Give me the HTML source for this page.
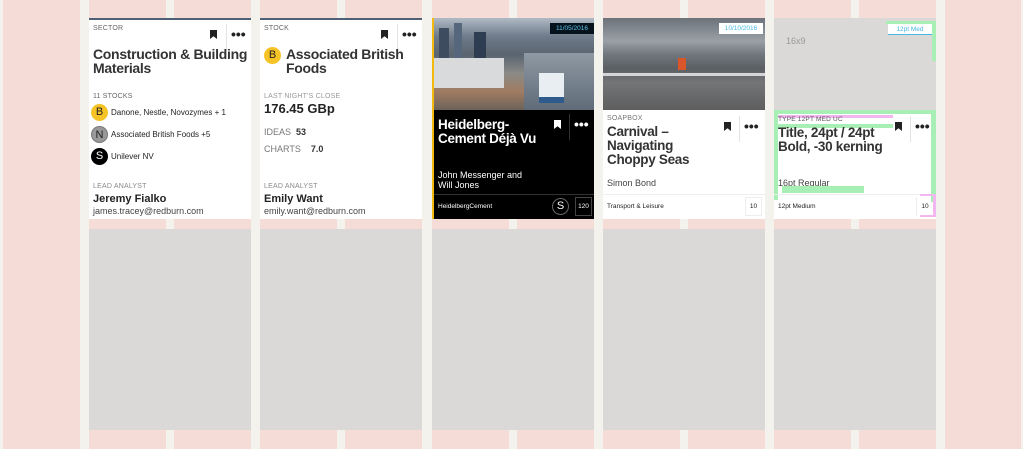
<!DOCTYPE html>
<html><head><meta charset="utf-8"><style>
*{margin:0;padding:0;box-sizing:border-box}
body{width:1023px;height:449px;background:#f3f2ed;position:relative;overflow:hidden;font-family:"Liberation Sans",Arial,sans-serif;color:#222}
.p{position:absolute;background:#f6dcd7}
.g{position:absolute;background:#dad9d7}
.card{position:absolute;top:18px;height:201px;width:162px;background:#fff;overflow:hidden}
.a{position:absolute;white-space:nowrap}
.lbl{font-size:7px;color:#666;letter-spacing:.2px}
.ttl{font-size:13.5px;font-weight:bold;line-height:14px;letter-spacing:-.3px;color:#333}
.bm{position:absolute;width:7px;height:9px;background:#222;clip-path:polygon(0 0,100% 0,100% 100%,50% 70%,0 100%)}
.dots{position:absolute;font-size:14px;font-weight:bold;letter-spacing:0px;line-height:8px}
.sep{position:absolute;width:1px;height:26px;background:#e3e3e3}
.c{position:absolute;width:17px;height:17px;border-radius:50%;font-size:11px;text-align:center;line-height:17px}
</style></head><body>
<div class="p" style="left:3px;top:0;width:77px;height:449px"></div>
<div class="p" style="left:945px;top:0;width:76px;height:449px"></div>
<div class="p" style="left:89px;top:0;width:77px;height:449px"></div><div class="p" style="left:174px;top:0;width:77px;height:449px"></div>
<div class="p" style="left:260px;top:0;width:77px;height:449px"></div><div class="p" style="left:345px;top:0;width:77px;height:449px"></div>
<div class="p" style="left:432px;top:0;width:77px;height:449px"></div><div class="p" style="left:517px;top:0;width:77px;height:449px"></div>
<div class="p" style="left:603px;top:0;width:77px;height:449px"></div><div class="p" style="left:688px;top:0;width:77px;height:449px"></div>
<div class="p" style="left:774px;top:0;width:77px;height:449px"></div><div class="p" style="left:859px;top:0;width:77px;height:449px"></div>
<div class="g" style="left:89px;top:229px;width:162px;height:201px"></div>
<div class="g" style="left:260px;top:229px;width:162px;height:201px"></div>
<div class="g" style="left:432px;top:229px;width:162px;height:201px"></div>
<div class="g" style="left:603px;top:229px;width:162px;height:201px"></div>
<div class="g" style="left:774px;top:229px;width:162px;height:201px"></div>

<!-- card 1 -->
<div class="card" style="left:89px;border-top:2px solid #4f5f74">
<div class="a lbl" style="left:4px;top:5px">SECTOR</div>
<div class="bm" style="left:121px;top:10px"></div><div class="sep" style="left:137px;top:4px"></div><div class="dots" style="left:142px;top:10px">•••</div>
<div class="a ttl" style="left:4px;top:27px;font-size:14px">Construction &amp; Building<br>Materials</div>
<div class="a lbl" style="left:4px;top:73px">11 STOCKS</div>
<div class="c" style="left:2px;top:84px;background:#f6c327">B</div><div class="a" style="left:22px;top:88px;font-size:8px">Danone, Nestle, Novozymes + 1</div>
<div class="c" style="left:2px;top:106px;background:#999;border:1px solid #777">N</div><div class="a" style="left:22px;top:110px;font-size:8px">Associated British Foods +5</div>
<div class="c" style="left:2px;top:128px;background:#000;color:#fff">S</div><div class="a" style="left:22px;top:132px;font-size:8px">Unilever NV</div>
<div class="a lbl" style="left:4px;top:163px;color:#888">LEAD ANALYST</div>
<div class="a" style="left:4px;top:173px;font-size:11px;font-weight:bold">Jeremy Fialko</div>
<div class="a" style="left:4px;top:186px;font-size:9px;color:#444">james.tracey@redburn.com</div>
</div>
<!-- card 2 -->
<div class="card" style="left:260px;border-top:2px solid #4f5f74">
<div class="a lbl" style="left:4px;top:5px">STOCK</div>
<div class="bm" style="left:121px;top:10px"></div><div class="sep" style="left:137px;top:4px"></div><div class="dots" style="left:142px;top:10px">•••</div>
<div class="c" style="left:4px;top:27px;background:#f6c327">B</div>
<div class="a ttl" style="left:26px;top:27px;font-size:14px">Associated British<br>Foods</div>
<div class="a lbl" style="left:4px;top:73px;color:#999">LAST NIGHT'S CLOSE</div>
<div class="a" style="left:4px;top:81px;font-size:13px;font-weight:bold">176.45 GBp</div>
<div class="a" style="left:4px;top:107px;font-size:9px;color:#777">IDEAS <b style="color:#333">&nbsp;53</b></div>
<div class="a" style="left:4px;top:124px;font-size:9px;color:#777">CHARTS <b style="color:#333">&nbsp;&nbsp;&nbsp;7.0</b></div>
<div class="a lbl" style="left:4px;top:163px;color:#888">LEAD ANALYST</div>
<div class="a" style="left:4px;top:173px;font-size:11px;font-weight:bold">Emily Want</div>
<div class="a" style="left:4px;top:186px;font-size:9px;color:#444">emily.want@redburn.com</div>
</div>
<!-- card 3 -->
<div class="card" style="left:432px;background:#000;border-left:2px solid #f2b90f;color:#fff">
<div class="a" style="left:0;top:0;width:162px;height:92px;background:linear-gradient(180deg,#b0bac5 0%,#6f7b8a 20%,#5a6470 40%,#8a8a86 60%,#a07c62 80%,#6c625a 100%)"></div>
<div class="a" style="left:5px;top:10px;width:10px;height:30px;background:#3e4c60"></div>
<div class="a" style="left:20px;top:5px;width:8px;height:35px;background:#56677d"></div>
<div class="a" style="left:40px;top:14px;width:12px;height:26px;background:#2f3d52"></div>
<div class="a" style="left:0;top:40px;width:70px;height:30px;background:#d9dadb"></div>
<div class="a" style="left:90px;top:35px;width:72px;height:57px;background:linear-gradient(180deg,#8e99a3,#5f6b78)"></div>
<div class="a" style="left:105px;top:55px;width:25px;height:30px;background:#e8eef2;border-bottom:6px solid #2e5a8c"></div>
<div class="a" style="left:116px;top:5px;width:44px;height:11px;background:#06121c;color:#5fc4ea;font-size:6.5px;text-align:center;line-height:11px">11/05/2016</div>
<div class="a" style="left:4px;top:100px;font-size:13.5px;font-weight:bold;line-height:14px;letter-spacing:-.3px">Heidelberg-<br>Cement Déjà Vu</div>
<div class="bm" style="left:120px;top:102px;background:#fff"></div><div class="sep" style="left:135px;top:96px;background:#333"></div><div class="dots" style="left:140px;top:102px">•••</div>
<div class="a" style="left:4px;top:152px;font-size:9px;line-height:10px">John Messenger and<br>Will Jones</div>
<div class="a" style="left:0;top:176px;width:160px;height:1px;background:#333"></div>
<div class="a" style="left:4px;top:185px;font-size:6.5px">HeidelbergCement</div>
<div class="c" style="left:118px;top:180px;border:1px solid #666;font-size:11px;line-height:15px">S</div>
<div class="a" style="left:141px;top:179px;width:17px;height:19px;border:1px solid #444;font-size:6.5px;text-align:center;line-height:17px">120</div>
</div>
<!-- card 4 -->
<div class="card" style="left:603px">
<div class="a" style="left:0;top:0;width:162px;height:92px;background:linear-gradient(180deg,#6c727a 0%,#9aa0a6 25%,#70767c 40%,#5b5f63 55%,#737577 70%,#5e5e5e 100%)"></div>
<div class="a" style="left:0;top:55px;width:162px;height:3px;background:#d6d6d6"></div>
<div class="a" style="left:75px;top:40px;width:8px;height:12px;background:#d8562a"></div>
<div class="a" style="left:116px;top:5px;width:44px;height:11px;background:#fff;color:#49b8e6;font-size:6.5px;text-align:center;line-height:11px">10/10/2016</div>
<div class="a lbl" style="left:4px;top:97px;color:#777">SOAPBOX</div>
<div class="a ttl" style="left:4px;top:107px">Carnival –<br>Navigating<br>Choppy Seas</div>
<div class="bm" style="left:121px;top:104px"></div><div class="sep" style="left:136px;top:98px"></div><div class="dots" style="left:141px;top:104px">•••</div>
<div class="a" style="left:4px;top:160px;font-size:9px;color:#444">Simon Bond</div>
<div class="a" style="left:0;top:176px;width:162px;height:1px;background:#eee"></div>
<div class="a" style="left:4px;top:185px;font-size:6.5px">Transport &amp; Leisure</div>
<div class="a" style="left:142px;top:179px;width:17px;height:19px;border:1px solid #eee;font-size:6.5px;text-align:center;line-height:17px">10</div>
</div>
<!-- card 5 -->
<div class="card" style="left:774px">
<div class="a" style="left:0;top:0;width:162px;height:92px;background:#dad9d7"></div>
<div class="a" style="left:12px;top:18px;font-size:9px;color:#999">16x9</div>
<div class="a" style="left:112px;top:3px;width:48px;height:3px;background:#a7efb4"></div>
<div class="a" style="left:158px;top:3px;width:4px;height:40px;background:#a7efb4"></div>
<div class="a" style="left:114px;top:6px;width:44px;height:11px;background:#fff;color:#49b8e6;font-size:6.5px;text-align:center;line-height:11px;border-bottom:1px solid #49b8e6">12pt Med</div>
<div class="a" style="left:0;top:92px;width:162px;height:4px;background:#a7efb4"></div>
<div class="a" style="left:0;top:92px;width:4px;height:90px;background:#a7efb4"></div>
<div class="a" style="left:157px;top:92px;width:5px;height:92px;background:#a7efb4"></div>
<div class="a" style="left:4px;top:97px;width:115px;height:3px;background:#f2b7f0"></div>
<div class="a" style="left:4px;top:106px;width:115px;height:4px;background:#a7efb4"></div>
<div class="a lbl" style="left:4px;top:98px;color:#555;font-size:6.5px">TYPE 12PT MED UC</div>
<div class="a ttl" style="left:4px;top:108px">Title, 24pt / 24pt<br>Bold, -30 kerning</div>
<div class="bm" style="left:121px;top:104px"></div><div class="sep" style="left:136px;top:98px"></div><div class="dots" style="left:141px;top:104px">•••</div>
<div class="a" style="left:4px;top:160px;font-size:9px;color:#444">16pt Regular</div>
<div class="a" style="left:8px;top:168px;width:82px;height:7px;background:#a7efb4"></div>
<div class="a" style="left:0;top:176px;width:162px;height:1px;background:#eee"></div>
<div class="a" style="left:4px;top:185px;font-size:6.5px">12pt Medium</div>
<div class="a" style="left:146px;top:176px;width:16px;height:2px;background:#f2b7f0"></div>
<div class="a" style="left:146px;top:197px;width:16px;height:2px;background:#f2b7f0"></div>
<div class="a" style="left:159px;top:178px;width:3px;height:19px;background:#f2b7f0"></div>
<div class="a" style="left:142px;top:179px;width:17px;height:19px;border-left:1px solid #eee;font-size:6.5px;text-align:center;line-height:19px">10</div>
</div>
</body></html>
